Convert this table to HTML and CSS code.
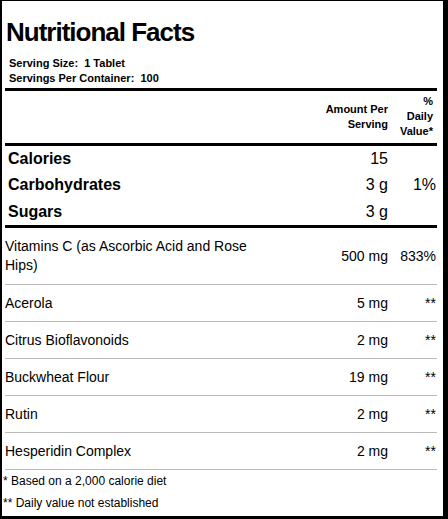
FILE: index.html
```html
<!DOCTYPE html>
<html lang="en">

<head>
  <meta charset="UTF-8">
  <meta name="viewport" content="width=device-width, initial-scale=1.0">
  <title>Nutritional Facts</title>
  <link rel="stylesheet" href="styles.css">
</head>

<body>

  <div class="label">
    <h1 class="label-title">Nutritional Facts</h1>

    <div class="serving">
      <div>Serving Size:&nbsp; 1 Tablet</div>
      <div>Servings Per Container:&nbsp; 100</div>
    </div>

    <table class="facts">
      <thead>
        <tr>
          <th class="name"></th>
          <th class="amount">Amount Per<br>Serving</th>
          <th class="dv">%<br>Daily<br>Value*</th>
        </tr>
      </thead>
      <tbody class="main">
        <tr>
          <td class="name">Calories</td>
          <td class="amount">15</td>
          <td class="dv"></td>
        </tr>
        <tr class="mid">
          <td class="name">Carbohydrates</td>
          <td class="amount">3 g</td>
          <td class="dv">1%</td>
        </tr>
        <tr class="last">
          <td class="name">Sugars</td>
          <td class="amount">3 g</td>
          <td class="dv"></td>
        </tr>
      </tbody>
      <tbody class="nutrients">
        <tr class="multi">
          <td class="name">Vitamins C (as Ascorbic Acid and Rose Hips)</td>
          <td class="amount">500 mg</td>
          <td class="dv">833%</td>
        </tr>
        <tr>
          <td class="name">Acerola</td>
          <td class="amount">5 mg</td>
          <td class="dv">**</td>
        </tr>
        <tr>
          <td class="name">Citrus Bioflavonoids</td>
          <td class="amount">2 mg</td>
          <td class="dv">**</td>
        </tr>
        <tr>
          <td class="name">Buckwheat Flour</td>
          <td class="amount">19 mg</td>
          <td class="dv">**</td>
        </tr>
        <tr>
          <td class="name">Rutin</td>
          <td class="amount">2 mg</td>
          <td class="dv">**</td>
        </tr>
        <tr>
          <td class="name">Hesperidin Complex</td>
          <td class="amount">2 mg</td>
          <td class="dv">**</td>
        </tr>
      </tbody>
    </table>

    <div class="footnotes">
      <div>* Based on a 2,000 calorie diet</div>
      <div>** Daily value not established</div>
    </div>
  </div>

</body>

</html>
```

FILE: styles.css
```css
body {
  font-family: "Liberation Sans", Arial, sans-serif;
  color: #000;
  background-color: #fff;
  margin: 0;
}

.label {
  box-sizing: border-box;
  width: 448px;
  height: 519px;
  border-style: solid;
  border-color: #000;
  border-width: 1px 5px 3px 2px;
  padding: 0 6px 0 3px;
}

.label-title {
  font-size: 26px;
  font-weight: bold;
  letter-spacing: -1px;
  line-height: 30px;
  margin: 0;
  padding: 16px 0 0 1px;
}

.serving {
  font-size: 11px;
  font-weight: bold;
  line-height: 15px;
  margin-top: 9px;
  padding-left: 4px;
  margin-bottom: 2px;
}

.facts {
  width: 100%;
  table-layout: fixed;
  border-collapse: separate;
  border-spacing: 0;
}

.facts td,
.facts th {
  padding: 0;
  text-align: left;
}

.facts .amount,
.facts .dv {
  text-align: right;
}

.facts th {
  font-size: 11px;
  font-weight: bold;
  line-height: 15px;
  border-top: 3px solid #000;
  border-bottom: 3px solid #000;
  padding: 3px 0 4px 0;
  vertical-align: middle;
}

.facts th.name {
  width: 258px;
}

.facts th.dv {
  width: 45px;
  padding-right: 4px;
}

.main td {
  font-size: 16px;
  line-height: 18px;
  padding: 4px 0;
}

.main td.name {
  font-weight: bold;
  padding-left: 3px;
}

.main .mid td {
  padding-bottom: 5px;
}

.main .last td {
  border-bottom: 3px solid #000;
}

.nutrients td {
  font-size: 14px;
  line-height: 19px;
  padding: 9px 0 8px 0;
  border-bottom: 1px solid #bbb;
  vertical-align: middle;
}

.nutrients .multi td {
  padding-bottom: 9px;
}

.facts td.dv {
  padding-right: 1px;
}

.footnotes {
  font-size: 12px;
  line-height: 14px;
  margin-left: -2px;
}

.footnotes div {
  padding: 4px 0;
}
```
